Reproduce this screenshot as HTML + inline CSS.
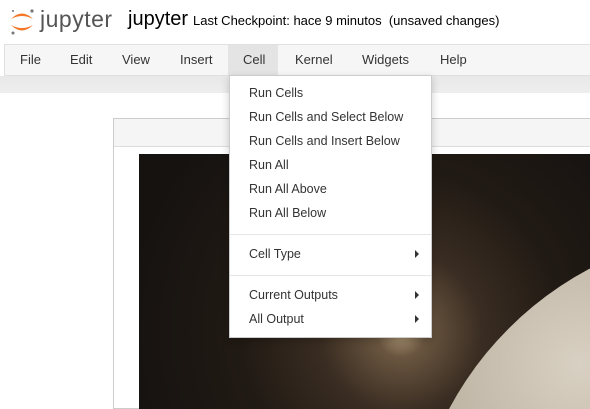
<!DOCTYPE html>
<html><head><meta charset="utf-8"><style>
html,body{margin:0;width:590px;height:409px;overflow:hidden;background:#fff;font-family:"Liberation Sans",Helvetica,sans-serif;position:relative}
.a{position:absolute}
.menu span{position:absolute;top:52px;font-size:13px;color:#333}
.dd div{position:absolute;left:19px;font-size:12.5px;color:#333}
.arr{position:absolute;left:185px;width:0;height:0;border-left:4px solid #333;border-top:4px solid transparent;border-bottom:4px solid transparent}
</style></head><body>
<svg class="a" style="left:8px;top:6px" width="30" height="30" viewBox="0 0 30 30">
<path d="M3 13 Q14 2 25 13 Q14 7 3 13Z" fill="#f37726"/>
<path d="M3 19 Q14 30 25 19 Q14 25 3 19Z" fill="#f37726"/>
<circle cx="24" cy="5" r="1.6" fill="#767677"/><circle cx="5" cy="5" r="1" fill="#767677"/><circle cx="5" cy="27" r="1.5" fill="#767677"/>
</svg>
<div class="a" style="left:40px;top:6px;font-size:23px;color:#555;letter-spacing:0.5px">jupyter</div>
<div class="a" style="left:128px;top:8px;font-size:20px;color:#000">jupyter</div>
<div class="a" style="left:193px;top:13px;font-size:13px;color:#000">Last Checkpoint: hace 9 minutos &nbsp;(unsaved changes)</div>
<div class="a" style="left:4px;top:44px;width:590px;height:30px;background:#f6f6f6;border:1px solid #e0e0e0"></div>
<div class="a" style="left:228px;top:45px;width:50px;height:30px;background:#e4e4e4"></div>
<div class="menu"><span style="left:20px">File</span><span style="left:70px">Edit</span><span style="left:122px">View</span><span style="left:180px">Insert</span><span style="left:243px">Cell</span><span style="left:295px">Kernel</span><span style="left:362px">Widgets</span><span style="left:440px">Help</span></div>
<div class="a" style="left:0;top:76px;width:590px;height:17px;background:linear-gradient(#e8e8e8,#eee)"></div>
<div class="a" style="left:113px;top:118px;width:476px;height:289px;border:1px solid #ccc;background:#fff"></div>
<div class="a" style="left:114px;top:119px;width:476px;height:27px;background:#f5f5f5;border-bottom:1px solid #ddd"></div>
<div class="a" style="left:139px;top:154px;width:451px;height:255px;overflow:hidden;background:radial-gradient(circle at 262px 178px,#b09a78 0,#6a5640 25px,#3a2d22 80px,#211a14 160px,#151210 280px)">
<div class="a" style="left:270px;top:75px;width:680px;height:680px;border-radius:50%;background:radial-gradient(circle at 25% 20%,#d8d0c2,#a89c8a 35%,#6a6055 65%)"></div>
</div>
<div class="a dd" style="left:229px;top:75px;width:201px;height:261px;background:#fff;border:1px solid #ccc;box-shadow:0 3px 8px rgba(0,0,0,.2)">
<div style="top:10px">Run Cells</div><div style="top:34px">Run Cells and Select Below</div><div style="top:58px">Run Cells and Insert Below</div><div style="top:82px">Run All</div><div style="top:106px">Run All Above</div><div style="top:130px">Run All Below</div>
<div style="left:0;top:158px;width:201px;height:1px;background:#e5e5e5"></div>
<div style="top:171px">Cell Type</div><span class="arr" style="top:174px"></span>
<div style="left:0;top:199px;width:201px;height:1px;background:#e5e5e5"></div>
<div style="top:212px">Current Outputs</div><span class="arr" style="top:215px"></span>
<div style="top:236px">All Output</div><span class="arr" style="top:239px"></span>
</div>
</body></html>
